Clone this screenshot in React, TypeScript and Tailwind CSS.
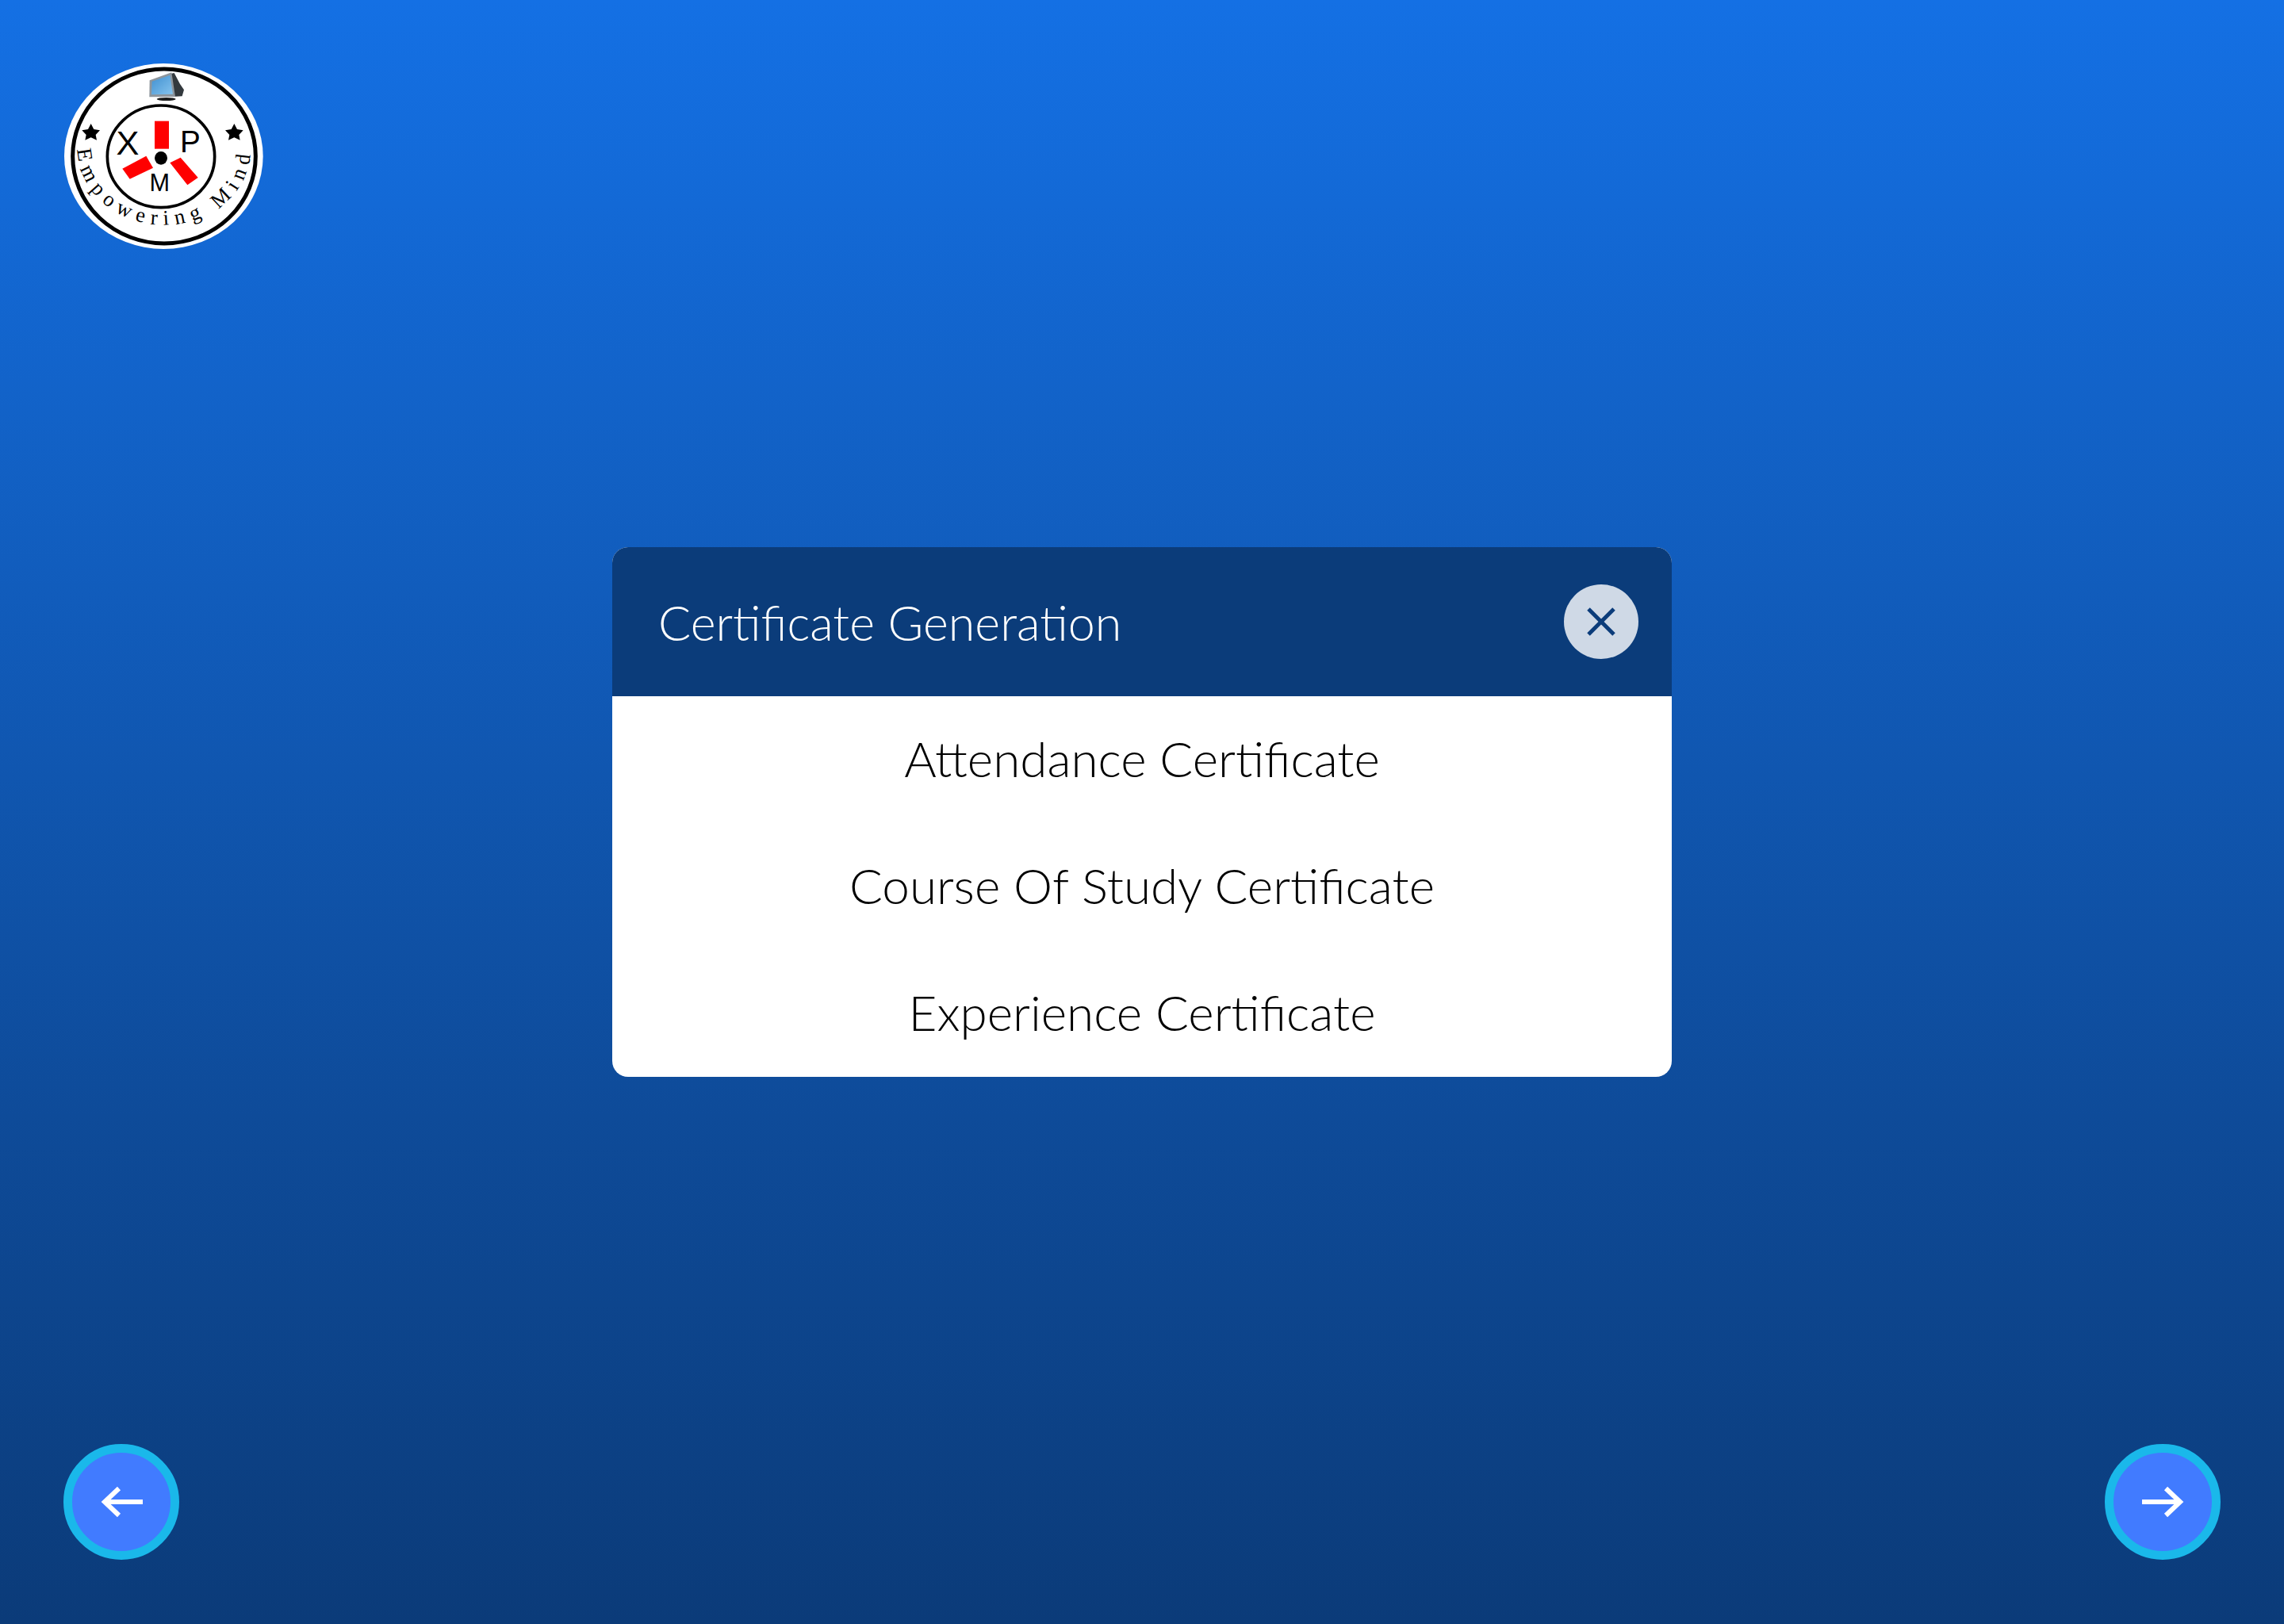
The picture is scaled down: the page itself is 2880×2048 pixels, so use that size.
const Logo = () => {
  return (
    <svg width="251" height="234" viewBox="62 60 753 702" className="block">
      <defs>
        <linearGradient id="screen" x1="0" y1="0" x2="1" y2="1">
          <stop offset="0" stopColor="#3f8fd0" />
          <stop offset="1" stopColor="#86c4ee" />
        </linearGradient>
      </defs>
      <ellipse cx="438" cy="411" rx="376" ry="351" fill="#ffffff" />
      <ellipse cx="440" cy="411" rx="346" ry="330" fill="none" stroke="#000000" strokeWidth="15" />
      <ellipse cx="428" cy="412" rx="203" ry="193" fill="none" stroke="#000000" strokeWidth="11" />

      {/* monitor */}
      <ellipse cx="448" cy="195" rx="36" ry="6" fill="#1c1c1c" />
      <path d="M462 100 L478 96 L500 138 L515 160 L508 184 L470 186 Z" fill="#33393d" />
      <path d="M385 124 L468 94 L482 186 L384 187 Z" fill="#8d959c" />
      <path d="M394 128 L462 104 L473 176 L392 178 Z" fill="url(#screen)" />

      {/* stars */}
      <path d="M163 288 L174 309 L197 313 L181 330 L185 350 L163 340 L141 350 L145 330 L129 313 L152 309 Z" fill="#000000" />
      <path d="M705 288 L716 309 L739 313 L723 330 L727 350 L705 340 L683 350 L687 330 L671 313 L694 309 Z" fill="#000000" />

      {/* blades */}
      <rect x="404" y="278" width="54" height="105" fill="#ff0000" />
      <polygon points="282,458 372,410 398,455 310,497" fill="#ff0000" />
      <polygon points="462,436 502,416 568,492 528,520" fill="#ff0000" />
      <ellipse cx="428" cy="418" rx="24" ry="25" fill="#000000" />

      <g fontFamily="'Liberation Sans', Arial, sans-serif" fill="#000000" textAnchor="middle">
        <text x="302" y="405" fontSize="130">X</text>
        <text x="539" y="396" fontSize="116">P</text>
        <text x="423" y="544" fontSize="92">M</text>
      </g>

      <path id="ring-text" d="M113 385 A 326 285 0 0 0 767 385" fill="none" />
      <text fontFamily="'Liberation Serif', 'Times New Roman', serif" fontSize="80" fill="#000000" letterSpacing="24">
        <textPath href="#ring-text">Empowering Mind</textPath>
      </text>
    </svg>
  );
};

const NavButton = ({ flip }: { flip?: boolean }) => {
  return (
    <button className="w-[146px] h-[146px] rounded-full bg-[#417bff] border-[11px] border-[#1ab8ea] flex items-center justify-center">
      <svg width="53" height="40" viewBox="0 0 53 40" fill="none" stroke="#ffffff" strokeWidth="6" className={flip ? "rotate-180" : ""}>
        <path d="M53 20 H5" />
        <path d="M23 3 L5 20 L23 37" />
      </svg>
    </button>
  );
};

const rows = ["Attendance Certificate", "Course Of Study Certificate", "Experience Certificate"];

export default function App() {
  return (
    <div
      className="relative w-[2880px] h-[2048px] flex flex-col justify-between bg-gradient-to-b from-[#1470e4] to-[#0b3b79] overflow-hidden"
      style={{ fontFamily: "Lato, 'Noto Sans', sans-serif" }}
    >
      <div className="pl-[81px] pt-[80px]">
        <Logo />
      </div>

      <div className="flex items-center justify-between px-[80px] pb-[81px]">
        <NavButton />
        <NavButton flip />
      </div>

      <div className="absolute inset-0 flex items-center justify-center">
        <div className="w-[1336px] rounded-[20px] overflow-hidden bg-white">
          <div className="h-[188px] bg-[#0b3c7a] flex items-center justify-between pl-[58px] pr-[42px]">
            <h1 className="text-[61px] font-light text-white pt-[2px]">Certificate Generation</h1>
            <button className="w-[94px] h-[94px] rounded-full bg-[#cfd9e6] flex items-center justify-center">
              <svg width="36" height="36" viewBox="0 0 36 36" fill="none" stroke="#0b3c7a" strokeWidth="5">
                <path d="M2 2 L34 34" />
                <path d="M34 2 L2 34" />
              </svg>
            </button>
          </div>
          {rows.map((row) => (
            <div key={row} className="h-[160px] flex items-center justify-center text-[62px] font-light text-black pb-[3px]">
              {row}
            </div>
          ))}
        </div>
      </div>
    </div>
  );
}
